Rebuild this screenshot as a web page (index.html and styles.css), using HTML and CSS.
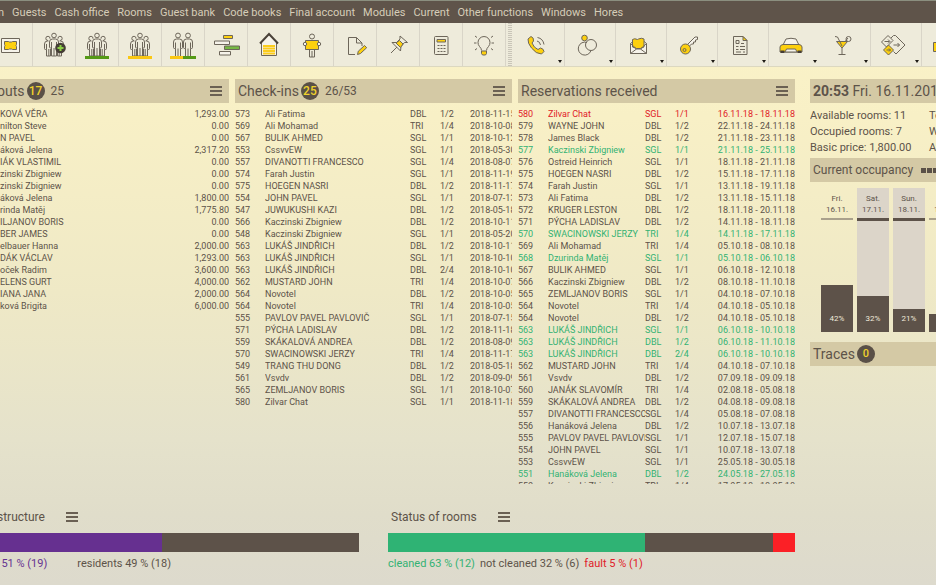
FILE: index.html
```html
<!DOCTYPE html>
<html lang="en">
<head>
<meta charset="utf-8">
<title>Hores</title>
<link rel="stylesheet" href="styles.css">
</head>
<body>
<svg class="defs" aria-hidden="true">
  <symbol id="person" viewBox="0 0 12 26">
    <circle cx="6" cy="3.5" r="2.4"/>
    <path d="M3.5 24.5v-8h-1q-1 0-1-1v-5.500q0-3 3-3h3q3 0 3 3v5.500q0 1-1 1h-1v8zM6 16.500v8M3.500 10.500v6M8.500 10.500v6"/>
  </symbol>
  <symbol id="trio" viewBox="0 0 30 30">
    <circle cx="15" cy="5.500" r="2.300"/>
    <path d="M12.500 26v-8h-1q-1 0-1-1v-5q0-3 3-3h3q3 0 3 3v5q0 1-1 1h-1v8zM15 18v8M12.500 12v6M17.500 12v6"/>
    <path d="M11 8.700a2.100 2.100 0 1 0-2 1.800M9.500 11h-1q-3 0-3 3v4.500q0 1 1 1h1v6.500h4v-7M7.500 14v5.500M9.800 19v7M19 8.700a2.100 2.100 0 1 1 2 1.800M20.500 11h1q3 0 3 3v4.500q0 1-1 1h-1v6.500h-4v-7M22.500 14v5.500M20.200 19v7"/>
  </symbol>
  <symbol id="bars" viewBox="0 0 12 10"><path class="burger" d="M0 1h12M0 5h12M0 9h12"/></symbol>
</svg>

<nav class="menu">
  <a href="#">n</a><a href="#">Guests</a><a href="#">Cash office</a><a href="#">Rooms</a><a href="#">Guest bank</a><a href="#">Code books</a><a href="#">Final account</a><a href="#">Modules</a><a href="#">Current</a><a href="#">Other functions</a><a href="#">Windows</a><a href="#">Hores</a>
</nav>

<div class="toolbar">
  <button aria-label="Room plan"><svg viewBox="0 0 30 30"><path class="w" d="M5.500 8.500h18v14h-18z"/><path class="y" d="M8.500 11.500h4l1 .5h2l1-.5h4v3l-.5 1 .5 1v3h-4l-1-.5h-2l-1 .5h-4v-3l.5-1-.5-1z"/></svg></button>
  <button aria-label="Add guests"><svg viewBox="0 0 30 30"><use href="#trio"/><circle class="d" cx="21.500" cy="18" r="5.300"/><path class="plus" d="M21.500 15v6M18.500 18h6"/></svg></button>
  <button aria-label="Guests in house"><svg viewBox="0 0 30 30"><use href="#trio"/><path class="gf" d="M3 26h24v3H3z"/></svg></button>
  <button aria-label="Guests arriving"><svg viewBox="0 0 30 30"><use href="#trio"/><path class="yf" d="M3 26h24v3H3z"/></svg></button>
  <button aria-label="Guest exchange"><svg viewBox="0 0 30 30"><use href="#person" x="4" y="2" width="12" height="26"/><use href="#person" x="14" y="2" width="12" height="26"/><path class="yf" d="M2 26h13v3H2z"/><path class="gf" d="M15 26h13v3H15z"/></svg></button>
  <button aria-label="Reservation chart"><svg viewBox="0 0 30 30"><path class="y" d="M12.500 5.500h9v3h-9z"/><path class="w" d="M3.500 11h15v3.500h-15zM8.500 21.500h11v3.500h-11z"/><path class="g" d="M13.500 16h15v3.500h-15z"/></svg></button>
  <button aria-label="House"><svg viewBox="0 0 30 30"><path class="w" d="M7.500 12v13.500h15V12L15 4z"/><path class="stripe" d="M9 16h12M9 18.500h12M9 21h12M9 23.500h12"/><path class="roof" d="M6 13.500L15 4l9 9.500"/></svg></button>
  <button aria-label="Groups"><svg viewBox="0 0 30 30"><circle cx="15" cy="6.500" r="2.500"/><path d="M12.500 20v7h5v-7M15 21v6"/><path class="y" d="M8.500 10.500h13v9h-13z"/><circle class="w" cx="8" cy="14" r="1.700"/><circle class="w" cx="22" cy="14" r="1.700"/></svg></button>
  <button aria-label="Notes"><svg viewBox="0 0 30 30"><path d="M15 24.500H8.500v-17h8l5.500 5.500v3M16.500 7.500V13H22"/><path class="y" d="M17.500 24.500l.8-3.300 6.200-5.700 2.200 2.200-6.200 5.800z"/></svg></button>
  <button aria-label="Pinned"><svg viewBox="0 0 30 30"><path d="M8 23l6-6M9 12.500l8.500 8.500.5-4.500 3.500-4h3L17 6v3l-3.500 3.500z"/><path class="y" d="M13 13l3.500-2.500 3.500 3.500-2.500 3.500z"/></svg></button>
  <button aria-label="Calculator"><svg viewBox="0 0 30 30"><rect x="8.500" y="6.500" width="13.500" height="18" rx="1"/><path class="y" d="M11 9.500h8.500v2.500H11z"/><path class="dots" d="M11.500 15.500h8M11.500 18.500h8M11.500 21.500h8"/></svg></button>
  <button aria-label="Ideas"><svg viewBox="0 0 30 30"><path d="M12.500 20.500q0-2-2-4a6 6 0 1 1 9 0q-2 2-2 4"/><path class="y" d="M12.500 21h5v2.500l-1 1.500h-3l-1-1.500z"/><path class="ray" d="M5 13h2.500M22.500 13H25M6 6l2 1.500M24 6l-2 1.500M6 20l2-1.500M24 20l-2-1.500"/></svg></button>
  <span class="handle"></span>
  <button class="drop" aria-label="Phone"><svg viewBox="0 0 30 30"><path class="y" d="M7 9l3-2.500q3 1 2.500 4.500L11 13q2 5 6 6.500l2.500-1.500q3 .5 3.500 3.500L20.500 24Q15 24 10.500 18 6.500 13 7 9z"/><path d="M16 11q3 .5 3.500 4M16.500 7.500q5.500 1 6.500 7"/></svg></button>
  <button class="drop" aria-label="Links"><svg viewBox="0 0 30 30"><circle class="y" cx="12.500" cy="8" r="2.800"/><circle cx="19" cy="15" r="5.500"/><path d="M15 12.500a6.500 6.500 0 1 0 4 8"/></svg></button>
  <button class="drop" aria-label="Mail"><svg viewBox="0 0 30 30"><path class="w" d="M7.500 13.500l3-2.500h10l3 2.500v10h-16z"/><path class="y" d="M9.500 9.500q2-1.500 5 0l1-.5q3-1.500 5.500 0V17l-3.500 1.500h-4L9.500 17z"/><path d="M7.500 13.500l6 5.500h4l6-5.500M7.500 23.500l6-4.500M23.500 23.500l-6-4.500"/></svg></button>
  <button class="drop" aria-label="Keys"><svg viewBox="0 0 30 30"><path class="w" d="M13.500 14.500l7.500-7.500h2.500v2.500l-2 .5v2h-2v2h-2l-2.500 2.500z"/><circle class="y" cx="11.500" cy="19" r="5"/><circle cx="10.500" cy="20" r="1.500"/></svg></button>
  <button class="drop" aria-label="Reports"><svg viewBox="0 0 30 30"><path d="M8.500 6.500h9.500l4 4v14H8.500z"/><path class="y" d="M18 6.500v4h4z"/><path d="M11 10.500h3v3h-3zM11 16.500h2.500M15 16.500h5M11 19.500h2.500M15 19.500h5M11 22h5M18 22h2M16 13.500h3"/></svg></button>
  <button class="drop plain" aria-label="Cars"><svg viewBox="0 0 30 30"><path class="w" d="M7 15l3-6q5-1.500 10 0l3 6z"/><path class="y" d="M4 17q0-2 3-2.500h16q3 .5 3 2.500v5H4z"/><path class="d" d="M4.500 20.500h4V23h-4zM21.500 20.500h4V23h-4z"/><path class="w" d="M10.500 19h9l1.500 3H9z"/></svg></button>
  <button class="drop" aria-label="Bar"><svg viewBox="0 0 30 30"><path class="y" d="M9.500 11.500h11L15 18z"/><path d="M15 18v6M11.500 24.500h7M8 6.500l2.500.5L15 16M18.500 11l2.500-3"/><circle cx="21.500" cy="9" r="2.500"/></svg></button>
  <button class="drop" aria-label="Transfers"><svg viewBox="0 0 30 30"><path d="M3.500 12L10 5.500l5 5-6.500 6.500zM13 8l2.500-2.500h2L27 15l-9 9-2.500-2.500"/><path class="y" d="M5.500 20l5-5 5 5-5 5z"/><path d="M6.500 11.500h5M10 9.500l2 2-2 2M15.500 15h6M19.500 13l2 2-2 2M8.500 20h4M11 18.500l1.500 1.500-1.500 1.500"/></svg></button>
  <button class="drop" aria-label="Vouchers"><svg viewBox="0 0 30 30"><path class="y" d="M4.500 12.500h19v9h-19z"/></svg></button>
</div>

<main class="board">
  <section class="panel">
    <header class="head flush"><h2>outs</h2><span class="badge">17</span><span class="count">25</span><button class="more" aria-label="Check-outs menu"><svg><use href="#bars"/></svg></button></header>
    <div class="list"><table class="outs">
      <tr><td>KOVÁ VĚRA<td>1,293.00
      <tr><td>nilton Steve<td>0.00
      <tr><td>N PAVEL<td>0.00
      <tr><td>áková Jelena<td>2,317.20
      <tr><td>IÁK VLASTIMIL<td>0.00
      <tr><td>zinski Zbigniew<td>0.00
      <tr><td>zinski Zbigniew<td>0.00
      <tr><td>áková Jelena<td>1,800.00
      <tr><td>rinda Matěj<td>1,775.80
      <tr><td>ILJANOV BORIS<td>0.00
      <tr><td>BER JAMES<td>0.00
      <tr><td>elbauer Hanna<td>2,000.00
      <tr><td>DÁK VÁCLAV<td>1,293.00
      <tr><td>oček Radim<td>3,600.00
      <tr><td>ELENS GURT<td>4,000.00
      <tr><td>IANA JANA<td>2,000.00
      <tr><td>ková Brigita<td>6,000.00
    </table></div>
  </section>

  <section class="panel">
    <header class="head"><h2>Check-ins</h2><span class="badge">25</span><span class="count">26/53</span><button class="more" aria-label="Check-ins menu"><svg><use href="#bars"/></svg></button></header>
    <div class="list"><table class="ins">
      <tr><td>573<td>Ali Fatima<td>DBL<td>1/2<td>2018-11-15
      <tr><td>569<td>Ali Mohamad<td>TRI<td>1/4<td>2018-10-08
      <tr><td>567<td>BULIK AHMED<td>SGL<td>1/1<td>2018-10-12
      <tr><td>553<td>CssvvEW<td>SGL<td>1/1<td>2018-05-30
      <tr><td>557<td>DIVANOTTI FRANCESCO<td>SGL<td>1/4<td>2018-08-07
      <tr><td>574<td>Farah Justin<td>SGL<td>1/1<td>2018-11-19
      <tr><td>575<td>HOEGEN NASRI<td>DBL<td>1/2<td>2018-11-17
      <tr><td>554<td>JOHN PAVEL<td>SGL<td>1/1<td>2018-07-13
      <tr><td>547<td>JUWUKUSHI KAZI<td>DBL<td>1/2<td>2018-05-18
      <tr><td>566<td>Kaczinski Zbigniew<td>DBL<td>1/2<td>2018-10-11
      <tr><td>548<td>Kaczinski Zbigniew<td>SGL<td>1/1<td>2018-05-20
      <tr><td>563<td>LUKÁŠ JINDŘICH<td>DBL<td>1/2<td>2018-10-11
      <tr><td>563<td>LUKÁŠ JINDŘICH<td>SGL<td>1/1<td>2018-10-10
      <tr><td>563<td>LUKÁŠ JINDŘICH<td>DBL<td>2/4<td>2018-10-10
      <tr><td>562<td>MUSTARD JOHN<td>TRI<td>1/4<td>2018-10-07
      <tr><td>564<td>Novotel<td>DBL<td>1/2<td>2018-10-05
      <tr><td>564<td>Novotel<td>TRI<td>1/4<td>2018-10-05
      <tr><td>555<td>PAVLOV PAVEL PAVLOVIČ<td>SGL<td>1/1<td>2018-07-15
      <tr><td>571<td>PÝCHA LADISLAV<td>DBL<td>1/2<td>2018-11-18
      <tr><td>559<td>SKÁKALOVÁ ANDREA<td>DBL<td>1/2<td>2018-08-09
      <tr><td>570<td>SWACINOWSKI JERZY<td>TRI<td>1/4<td>2018-11-17
      <tr><td>549<td>TRANG THU DONG<td>DBL<td>1/2<td>2018-05-18
      <tr><td>561<td>Vsvdv<td>DBL<td>1/2<td>2018-09-09
      <tr><td>565<td>ZEMLJANOV BORIS<td>SGL<td>1/1<td>2018-10-07
      <tr><td>580<td>Zilvar Chat<td>SGL<td>1/1<td>2018-11-18
    </table></div>
  </section>

  <section class="panel">
    <header class="head"><h2>Reservations received</h2><button class="more" aria-label="Reservations menu"><svg><use href="#bars"/></svg></button></header>
    <div class="list"><table class="res">
      <tr class="red"><td>580<td>Zilvar Chat<td>SGL<td>1/1<td>16.11.18 - 18.11.18
      <tr><td>579<td>WAYNE JOHN<td>DBL<td>1/2<td>22.11.18 - 24.11.18
      <tr><td>578<td>James Black<td>DBL<td>1/2<td>21.11.18 - 23.11.18
      <tr class="green"><td>577<td>Kaczinski Zbigniew<td>SGL<td>1/1<td>21.11.18 - 25.11.18
      <tr><td>576<td>Ostreid Heinrich<td>SGL<td>1/1<td>18.11.18 - 21.11.18
      <tr><td>575<td>HOEGEN NASRI<td>DBL<td>1/2<td>15.11.18 - 17.11.18
      <tr><td>574<td>Farah Justin<td>SGL<td>1/1<td>13.11.18 - 19.11.18
      <tr><td>573<td>Ali Fatima<td>DBL<td>1/2<td>13.11.18 - 15.11.18
      <tr><td>572<td>KRUGER LESTON<td>DBL<td>1/2<td>18.11.18 - 20.11.18
      <tr><td>571<td>PÝCHA LADISLAV<td>DBL<td>1/2<td>14.11.18 - 18.11.18
      <tr class="green"><td>570<td>SWACINOWSKI JERZY<td>TRI<td>1/4<td>14.11.18 - 17.11.18
      <tr><td>569<td>Ali Mohamad<td>TRI<td>1/4<td>05.10.18 - 08.10.18
      <tr class="green"><td>568<td>Dzurinda Matěj<td>SGL<td>1/1<td>05.10.18 - 06.10.18
      <tr><td>567<td>BULIK AHMED<td>SGL<td>1/1<td>06.10.18 - 12.10.18
      <tr><td>566<td>Kaczinski Zbigniew<td>DBL<td>1/2<td>08.10.18 - 11.10.18
      <tr><td>565<td>ZEMLJANOV BORIS<td>SGL<td>1/1<td>04.10.18 - 07.10.18
      <tr><td>564<td>Novotel<td>TRI<td>1/4<td>04.10.18 - 05.10.18
      <tr><td>564<td>Novotel<td>DBL<td>1/2<td>04.10.18 - 05.10.18
      <tr class="green"><td>563<td>LUKÁŠ JINDŘICH<td>SGL<td>1/1<td>06.10.18 - 10.10.18
      <tr class="green"><td>563<td>LUKÁŠ JINDŘICH<td>DBL<td>1/2<td>06.10.18 - 11.10.18
      <tr class="green"><td>563<td>LUKÁŠ JINDŘICH<td>DBL<td>2/4<td>06.10.18 - 10.10.18
      <tr><td>562<td>MUSTARD JOHN<td>TRI<td>1/4<td>04.10.18 - 07.10.18
      <tr><td>561<td>Vsvdv<td>DBL<td>1/2<td>07.09.18 - 09.09.18
      <tr><td>560<td>JANÁK SLAVOMÍR<td>TRI<td>1/4<td>02.08.18 - 05.08.18
      <tr><td>559<td>SKÁKALOVÁ ANDREA<td>DBL<td>1/2<td>04.08.18 - 09.08.18
      <tr><td>557<td>DIVANOTTI FRANCESCO<td>SGL<td>1/4<td>05.08.18 - 07.08.18
      <tr><td>556<td>Hanáková Jelena<td>DBL<td>1/2<td>10.07.18 - 13.07.18
      <tr><td>555<td>PAVLOV PAVEL PAVLOVIČ<td>SGL<td>1/1<td>12.07.18 - 15.07.18
      <tr><td>554<td>JOHN PAVEL<td>SGL<td>1/1<td>10.07.18 - 13.07.18
      <tr><td>553<td>CssvvEW<td>SGL<td>1/1<td>25.05.18 - 30.05.18
      <tr class="green"><td>551<td>Hanáková Jelena<td>DBL<td>1/2<td>24.05.18 - 27.05.18
      <tr><td>550<td>Kaczinski Zbigniew<td>TRI<td>1/4<td>17.05.18 - 18.05.18
    </table></div>
  </section>

  <aside class="panel side">
    <header class="head"><h2><b>20:53</b> Fri. 16.11.2018</h2></header>
    <div class="facts">
      <span>Available rooms: 11</span><span>Total</span>
      <span>Occupied rooms: 7</span><span>Walk</span>
      <span>Basic price: 1,800.00</span><span>Avg</span>
    </div>
    <header class="head small"><h2>Current occupancy</h2><span class="pips"><i></i><i></i><i></i></span></header>
    <div class="chart">
      <div class="day"><p>Fri.<br>16.11.</p><div class="tube"><span style="height:42%">42%</span></div></div>
      <div class="day weekend"><p>Sat.<br>17.11.</p><div class="tube"><span style="height:32%">32%</span></div></div>
      <div class="day weekend"><p>Sun.<br>18.11.</p><div class="tube"><span style="height:21%">21%</span></div></div>
      <div class="day"><p>Mon.<br>19.11.</p><div class="tube"><span style="height:16%">16%</span></div></div>
    </div>
    <header class="head"><h2>Traces</h2><span class="badge light">0</span></header>
  </aside>
</main>

<footer class="stats">
  <section>
    <header class="flush"><h3>structure</h3><button class="more" aria-label="Structure menu"><svg><use href="#bars"/></svg></button></header>
    <div class="meter"><span class="bg-purple" style="width:45%"></span></div>
    <p class="legend wide"><span class="purple">s 51 % (19)</span><span>residents 49 % (18)</span></p>
  </section>
  <section>
    <header><h3>Status of rooms</h3><button class="more" aria-label="Status menu"><svg><use href="#bars"/></svg></button></header>
    <div class="meter"><span class="bg-green" style="width:63.200%"></span><span style="width:31.500%"></span><span class="bg-red" style="width:5.300%"></span></div>
    <p class="legend"><span class="green">cleaned 63 % (12)</span><span>not cleaned 32 % (6)</span><span class="red">fault 5 % (1)</span></p>
  </section>
</footer>
</body>
</html>
```
FILE: styles.css
```css
* { box-sizing: border-box; }

body {
  margin: 0;
  height: 100vh;
  display: flex;
  flex-direction: column;
  overflow: hidden;
  font-family: Roboto, "Liberation Sans", sans-serif;
  color: #5d5349;
  background: linear-gradient(#fbf3c8 0%, #f8f0c6 20%, #efe9c6 50%, #e5e2cb 75%, #e0ddca 88%, #dddacd 100%);
}

h2, h3, p { margin: 0; font-weight: 400; }
button { border: 0; padding: 0; background: none; font: inherit; color: inherit; }
svg { fill: none; stroke: #6d665a; stroke-width: 1; }
.defs { position: absolute; width: 0; height: 0; }

.menu {
  flex: none;
  display: flex;
  align-items: center;
  gap: 8px;
  height: 23px;
  margin-left: -2px;
  border-top: 1px solid #8b8f7f;
  background: #5f544a;
  font-size: 11px;
}
.menu a { color: #d6cdb8; text-decoration: none; white-space: nowrap; }

.toolbar {
  flex: none;
  display: flex;
  height: 44px;
  margin-left: -10px;
  background: #eeebdb;
  border-bottom: 1px solid #dcd8c0;
}
.toolbar button {
  position: relative;
  flex: none;
  width: 43px;
  display: grid;
  place-items: center;
  border-right: 1px solid #d9d5c8;
}
.toolbar svg { width: 30px; height: 30px; }
.toolbar .drop { width: 51px; padding-right: 7px; }
.toolbar .plain { border-color: transparent; }
.drop::after {
  content: "";
  position: absolute;
  right: 2px;
  bottom: 3px;
  border: 2px solid transparent;
  border-top: 3px solid #1c1914;
  border-bottom: 0;
}
.handle {
  flex: none;
  width: 8px;
  background: repeating-linear-gradient(#c9c5b8 0 1px, transparent 1px 2px);
  border-left: 2px solid #eeebdb;
  border-right: 2px solid #eeebdb;
}
.toolbar .w { fill: #f6f3ea; }
.toolbar .y { fill: #fdd00e; }
.toolbar .g { fill: #76b843; }
.toolbar .d { fill: #453d35; stroke: none; }
.toolbar .yf { fill: #fac713; stroke: none; }
.toolbar .gf { fill: #559a16; stroke: none; }
.plus { stroke: #8ccf45; stroke-width: 2; }
.stripe { stroke: #fbcc1c; stroke-width: 2; }
.roof { stroke: #4a4239; stroke-width: 2; }
.dots { stroke-dasharray: 2 1; }
.burger { stroke: #6a6053; stroke-width: 2; }

.board {
  flex: 1;
  min-height: 0;
  display: grid;
  grid-template-columns: 229fr 277fr 277fr 135fr;
  grid-template-rows: minmax(0, 1fr);
  gap: 6px;
  padding-top: 12px;
}
.panel { min-width: 0; display: flex; flex-direction: column; }
.head {
  flex: none;
  display: flex;
  align-items: center;
  gap: 2px;
  height: 24px;
  padding: 0 7px 0 3px;
  background: #d4c9a5;
  overflow: hidden;
}
.flush { margin-left: -3px; padding-left: 0; }
.head h2 { font-size: 14px; white-space: nowrap; }
.head.small h2 { font-size: 12px; }
.badge {
  flex: none;
  width: 18px;
  height: 18px;
  border-radius: 50%;
  background: #5a5047;
  color: #f0d22c;
  font-size: 12px;
  font-weight: 500;
  line-height: 18px;
  text-align: center;
}
.light { font-size: 11px; }
.count { margin-left: 4px; font-size: 12px; }
.more { flex: none; height: 10px; }
.more svg { display: block; width: 12px; height: 10px; }
.head .more { margin-left: auto; }

.list { min-height: 0; margin-top: 5px; overflow: hidden; }
table { width: 100%; table-layout: fixed; border-collapse: collapse; font-size: 9px; line-height: 12px; }
td { padding: 0; white-space: nowrap; overflow: hidden; }
.outs td:last-child { width: 60px; text-align: right; }
.ins td:nth-child(1), .res td:nth-child(1) { width: 30px; }
.ins td:nth-child(3), .res td:nth-child(3) { width: 30px; }
.ins td:nth-child(4) { width: 30px; }
.ins td:nth-child(5) { width: 42px; }
.res td:nth-child(4) { width: 40px; }
.res td:nth-child(5) { width: 80px; text-align: right; }
.red { color: #e02028; }
.green { color: #33b273; }
.purple { color: #663392; }

.side { margin-left: 9px; }
.facts {
  display: grid;
  grid-template-columns: 119px 60px;
  margin: 5px 0 2px;
  font-size: 11px;
  line-height: 16px;
  overflow: hidden;
  white-space: nowrap;
}
.pips { display: flex; gap: 1px; margin-left: 6px; }
.pips i { width: 5px; height: 5px; background: #5a5047; }
.chart {
  flex: none;
  display: flex;
  gap: 4px;
  margin: 6px 0 10px;
  padding-left: 11px;
  overflow: hidden;
}
.day { flex: none; width: 32px; text-align: center; font-size: 8px; }
.day p { height: 30px; padding-top: 5px; line-height: 11px; }
.tube { display: flex; align-items: flex-end; height: 114px; border-top: 2px solid #aaa18c; }
.weekend { background: #dcd5c9; }
.weekend .tube { border-top: 3px solid #5d5249; }
.tube span { width: 100%; padding-bottom: 8px; background: #5d5249; color: #f0eadb; display: flex; align-items: flex-end; justify-content: center; line-height: 10px; }

.stats {
  flex: none;
  display: grid;
  grid-template-columns: 359fr 407fr;
  gap: 29px;
  margin-top: 24px;
  padding: 0 141px 13px 0;
}
.stats header { display: flex; align-items: center; gap: 21px; height: 18px; padding-left: 3px; }
.stats .flush { padding-left: 0; }
.stats h3 { font-size: 12px; }
.meter { display: flex; height: 19px; margin: 7px 0 4px; background: #5d5249; }
.bg-purple { background: #663090; }
.bg-green { background: #2fb374; }
.bg-red { background: #fb2026; }
.legend { display: flex; gap: 5px; font-size: 11px; line-height: 16px; white-space: nowrap; }
.wide { gap: 30px; margin-left: -7px; }
```
